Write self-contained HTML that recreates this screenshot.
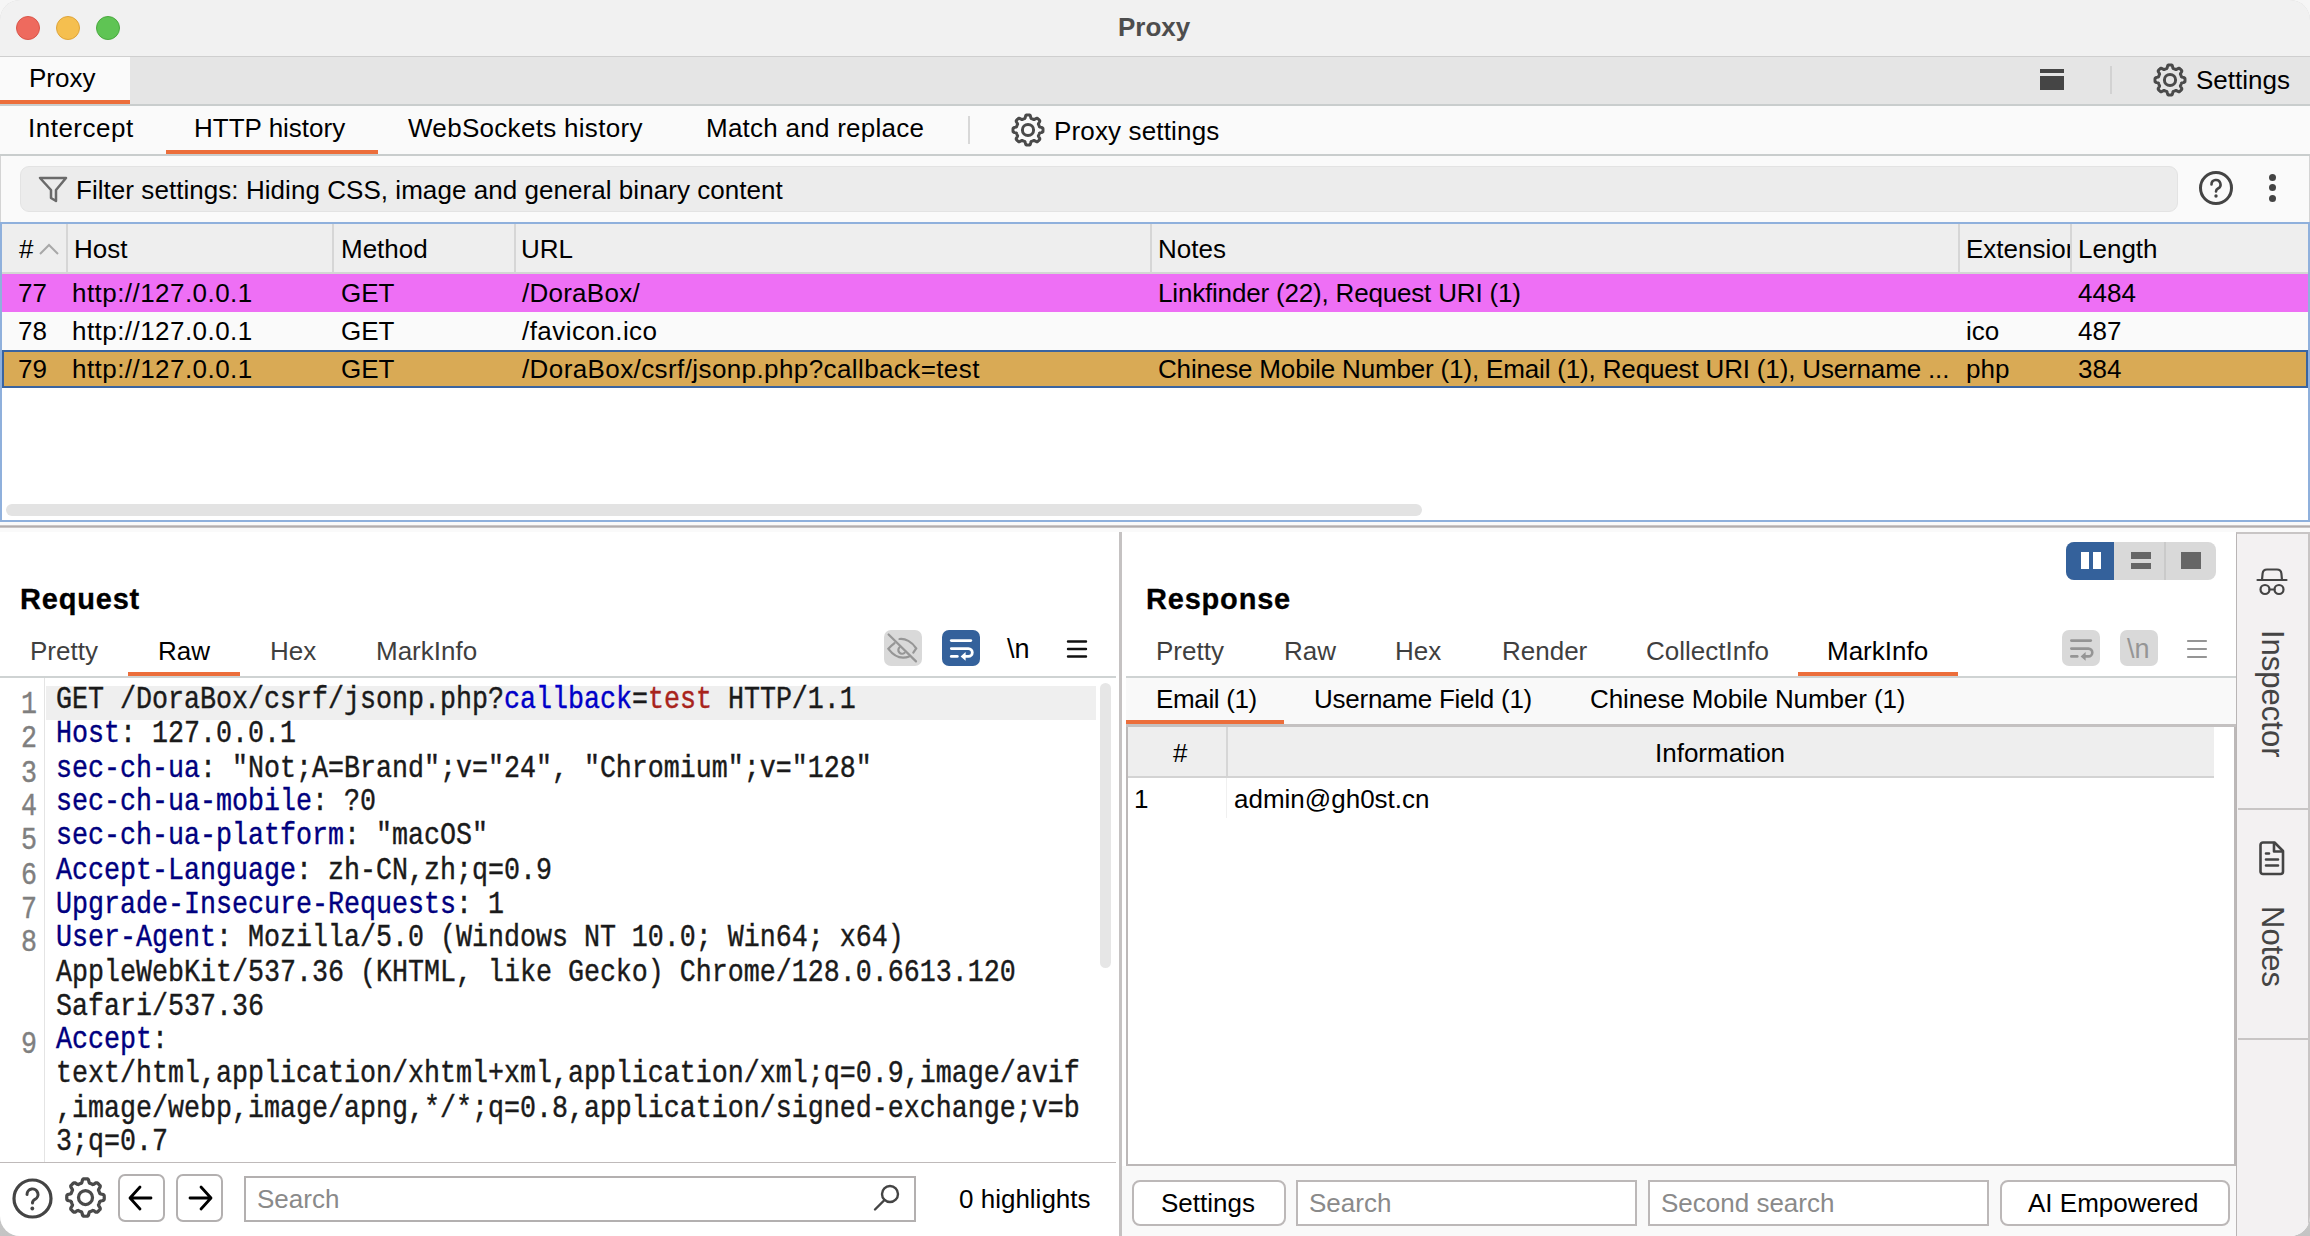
<!DOCTYPE html>
<html><head><meta charset="utf-8">
<style>
*{box-sizing:border-box;margin:0;padding:0}
html,body{width:2310px;height:1236px;overflow:hidden;background:linear-gradient(#f6f6f6,#f6f6f6 50%,#c4c4c4)}
body{font-family:"Liberation Sans",sans-serif;font-size:26px;color:#000;position:relative}
.a{position:absolute}
.t{position:absolute;white-space:nowrap;line-height:1}
.mono{font-family:"Liberation Mono",monospace;-webkit-text-stroke:0.35px currentColor}
.k{color:#00007f}
#win{position:absolute;left:0;top:0;width:2310px;height:1236px;background:#fafafa;border-radius:20px;overflow:hidden;box-shadow:inset 0 0 0 1px rgba(0,0,0,0.15)}
</style></head><body>
<div id="win">
<!-- title bar -->
<div class="a" style="left:0;top:0;width:2310px;height:57px;background:#f1f1f1;border-bottom:1px solid #cfcfcf"></div>
<div class="a" style="left:16px;top:16px;width:24px;height:24px;border-radius:50%;background:#ee6a5e;border:1px solid #d9564a"></div>
<div class="a" style="left:56px;top:16px;width:24px;height:24px;border-radius:50%;background:#f5bf4f;border:1px solid #dea43a"></div>
<div class="a" style="left:96px;top:16px;width:24px;height:24px;border-radius:50%;background:#5fc454;border:1px solid #4aa93f"></div>
<div class="t" style="left:1118px;top:14px;font-weight:bold;color:#4d4d4d;font-size:26px">Proxy</div>

<!-- row 1 tabs -->
<div class="a" style="left:0;top:57px;width:2310px;height:49px;background:#e5e5e5;border-bottom:2px solid #c9cdcd"></div>
<div class="a" style="left:0;top:57px;width:130px;height:47px;background:#fafafa"></div>
<div class="a" style="left:0;top:100px;width:130px;height:4px;background:#ec6e3b"></div>
<div class="t" style="left:29px;top:65px">Proxy</div>
<!-- window icon -->
<div class="a" style="left:2040px;top:69px;width:24px;height:4px;background:#454545"></div>
<div class="a" style="left:2040px;top:76px;width:24px;height:14px;background:#454545"></div>
<div class="a" style="left:2110px;top:66px;width:2px;height:28px;background:#d2d2d2"></div>
<svg class="a" style="left:2152px;top:62px" width="36" height="36" viewBox="0 0 36 36"><g fill="none" stroke="#4a4a4a" stroke-width="3"><path id="gearp" d="M18.00 3.00 L18.59 3.01 L19.18 3.05 L19.76 3.10 L20.28 3.63 L20.62 4.81 L20.88 5.99 L21.23 6.55 L21.68 6.68 L22.12 6.84 L22.55 7.01 L22.98 7.19 L23.40 7.40 L23.81 7.62 L24.45 7.47 L25.47 6.82 L26.55 6.23 L27.29 6.22 L27.74 6.59 L28.18 6.99 L28.61 7.39 L29.01 7.82 L29.41 8.26 L29.78 8.71 L29.77 9.45 L29.18 10.53 L28.53 11.55 L28.38 12.19 L28.60 12.60 L28.81 13.02 L28.99 13.45 L29.16 13.88 L29.32 14.32 L29.45 14.77 L30.01 15.12 L31.19 15.38 L32.37 15.72 L32.90 16.24 L32.95 16.82 L32.99 17.41 L33.00 18.00 L32.99 18.59 L32.95 19.18 L32.90 19.76 L32.37 20.28 L31.19 20.62 L30.01 20.88 L29.45 21.23 L29.32 21.68 L29.16 22.12 L28.99 22.55 L28.81 22.98 L28.60 23.40 L28.38 23.81 L28.53 24.45 L29.18 25.47 L29.77 26.55 L29.78 27.29 L29.41 27.74 L29.01 28.18 L28.61 28.61 L28.18 29.01 L27.74 29.41 L27.29 29.78 L26.55 29.77 L25.47 29.18 L24.45 28.53 L23.81 28.38 L23.40 28.60 L22.98 28.81 L22.55 28.99 L22.12 29.16 L21.68 29.32 L21.23 29.45 L20.88 30.01 L20.62 31.19 L20.28 32.37 L19.76 32.90 L19.18 32.95 L18.59 32.99 L18.00 33.00 L17.41 32.99 L16.82 32.95 L16.24 32.90 L15.72 32.37 L15.38 31.19 L15.12 30.01 L14.77 29.45 L14.32 29.32 L13.88 29.16 L13.45 28.99 L13.02 28.81 L12.60 28.60 L12.19 28.38 L11.55 28.53 L10.53 29.18 L9.45 29.77 L8.71 29.78 L8.26 29.41 L7.82 29.01 L7.39 28.61 L6.99 28.18 L6.59 27.74 L6.22 27.29 L6.23 26.55 L6.82 25.47 L7.47 24.45 L7.62 23.81 L7.40 23.40 L7.19 22.98 L7.01 22.55 L6.84 22.12 L6.68 21.68 L6.55 21.23 L5.99 20.88 L4.81 20.62 L3.63 20.28 L3.10 19.76 L3.05 19.18 L3.01 18.59 L3.00 18.00 L3.01 17.41 L3.05 16.82 L3.10 16.24 L3.63 15.72 L4.81 15.38 L5.99 15.12 L6.55 14.77 L6.68 14.32 L6.84 13.88 L7.01 13.45 L7.19 13.02 L7.40 12.60 L7.62 12.19 L7.47 11.55 L6.82 10.53 L6.23 9.45 L6.22 8.71 L6.59 8.26 L6.99 7.82 L7.39 7.39 L7.82 6.99 L8.26 6.59 L8.71 6.22 L9.45 6.23 L10.53 6.82 L11.55 7.47 L12.19 7.62 L12.60 7.40 L13.02 7.19 L13.45 7.01 L13.88 6.84 L14.32 6.68 L14.77 6.55 L15.12 5.99 L15.38 4.81 L15.72 3.63 L16.24 3.10 L16.82 3.05 L17.41 3.01Z" stroke-linejoin="round"/><circle cx="18" cy="18" r="5.6"/></g></svg>
<div class="t" style="left:2196px;top:67px">Settings</div>

<!-- row 2 tabs -->
<div class="a" style="left:0;top:106px;width:2310px;height:50px;background:#fafafa;border-bottom:2px solid #c9cdcd"></div>
<div class="t" style="left:28px;top:115px;letter-spacing:0.5px">Intercept</div>
<div class="t" style="left:194px;top:115px">HTTP history</div>
<div class="a" style="left:166px;top:150px;width:212px;height:4px;background:#ec6e3b"></div>
<div class="t" style="left:408px;top:115px;letter-spacing:0.3px">WebSockets history</div>
<div class="t" style="left:706px;top:115px;letter-spacing:0.25px">Match and replace</div>
<div class="a" style="left:968px;top:116px;width:2px;height:28px;background:#d8d8d8"></div>
<svg class="a" style="left:1010px;top:112px" width="36" height="36" viewBox="0 0 36 36"><g fill="none" stroke="#4a4a4a" stroke-width="3"><use href="#gearp"/><circle cx="18" cy="18" r="5.6"/></g></svg>
<div class="t" style="left:1054px;top:118px;letter-spacing:0.15px">Proxy settings</div>

<!-- filter bar -->
<div class="a" style="left:20px;top:166px;width:2158px;height:46px;background:#ececec;border:1px solid #e3e3e3;border-radius:9px"></div>
<svg class="a" style="left:38px;top:175px" width="30" height="30" viewBox="0 0 30 30"><path d="M2 3h26L18 15v11l-5-3V15z" fill="none" stroke="#6a6a6a" stroke-width="2.5" stroke-linejoin="round"/></svg>
<div class="t" style="left:76px;top:177px;letter-spacing:0.05px">Filter settings: Hiding CSS, image and general binary content</div>
<svg class="a" style="left:2198px;top:170px" width="36" height="36" viewBox="0 0 36 36"><circle cx="18" cy="18" r="15.5" fill="none" stroke="#444" stroke-width="3"/><path d="M13.5 14.5a4.5 4.5 0 1 1 6.5 4c-1.5.8-2 1.6-2 3" fill="none" stroke="#444" stroke-width="2.6" stroke-linecap="round"/><circle cx="18" cy="26" r="1.7" fill="#444"/></svg>
<div class="a" style="left:2269px;top:174px;width:7px;height:7px;border-radius:50%;background:#444"></div>
<div class="a" style="left:2269px;top:184px;width:7px;height:7px;border-radius:50%;background:#444"></div>
<div class="a" style="left:2269px;top:195px;width:7px;height:7px;border-radius:50%;background:#444"></div>

<!-- history table -->
<div class="a" style="left:0;top:222px;width:2310px;height:300px;background:#fff;border:2px solid #8fb0dc"></div>
<div class="a" style="left:2px;top:224px;width:2306px;height:50px;background:#eeeeee;border-bottom:2px solid #d3d6d4"></div>
<div class="a" style="left:66px;top:224px;width:2px;height:48px;background:#d6d6d6"></div>
<div class="a" style="left:332px;top:224px;width:2px;height:48px;background:#d6d6d6"></div>
<div class="a" style="left:514px;top:224px;width:2px;height:48px;background:#d6d6d6"></div>
<div class="a" style="left:1150px;top:224px;width:2px;height:48px;background:#d6d6d6"></div>
<div class="a" style="left:1958px;top:224px;width:2px;height:48px;background:#d6d6d6"></div>
<div class="a" style="left:2070px;top:224px;width:2px;height:48px;background:#d6d6d6"></div>
<div class="t" style="left:19px;top:236px">#</div>
<svg class="a" style="left:38px;top:242px" width="22" height="14" viewBox="0 0 22 14"><path d="M2 12L11 3l9 9" fill="none" stroke="#a8a8a8" stroke-width="2"/></svg>
<div class="t" style="left:74px;top:236px">Host</div>
<div class="t" style="left:341px;top:236px">Method</div>
<div class="t" style="left:521px;top:236px">URL</div>
<div class="t" style="left:1158px;top:236px">Notes</div>
<div class="a" style="left:1960px;top:224px;width:110px;height:48px;overflow:hidden"><div class="t" style="left:6px;top:12px">Extension</div></div>
<div class="t" style="left:2078px;top:236px">Length</div>

<!-- rows -->
<div class="a" style="left:2px;top:274px;width:2306px;height:38px;background:#ee6ff5"></div>
<div class="t" style="left:18px;top:280px">77</div>
<div class="t" style="left:72px;top:280px;letter-spacing:0.45px">http://127.0.0.1</div>
<div class="t" style="left:341px;top:280px">GET</div>
<div class="t" style="left:522px;top:280px;letter-spacing:0.25px">/DoraBox/</div>
<div class="t" style="left:1158px;top:280px;letter-spacing:-0.18px">Linkfinder (22), Request URI (1)</div>
<div class="t" style="left:2078px;top:280px">4484</div>

<div class="a" style="left:2px;top:312px;width:2306px;height:38px;background:#fafafa"></div>
<div class="t" style="left:18px;top:318px">78</div>
<div class="t" style="left:72px;top:318px;letter-spacing:0.45px">http://127.0.0.1</div>
<div class="t" style="left:341px;top:318px">GET</div>
<div class="t" style="left:522px;top:318px;letter-spacing:0.45px">/favicon.ico</div>
<div class="t" style="left:1966px;top:318px">ico</div>
<div class="t" style="left:2078px;top:318px">487</div>

<div class="a" style="left:2px;top:350px;width:2306px;height:38px;background:#d9aa55;border:2px solid #3a64a0"></div>
<div class="t" style="left:18px;top:356px">79</div>
<div class="t" style="left:72px;top:356px;letter-spacing:0.45px">http://127.0.0.1</div>
<div class="t" style="left:341px;top:356px">GET</div>
<div class="t" style="left:522px;top:356px;letter-spacing:0.4px">/DoraBox/csrf/jsonp.php?callback=test</div>
<div class="t" style="left:1158px;top:356px;letter-spacing:-0.16px">Chinese Mobile Number (1), Email (1), Request URI (1), Username ...</div>
<div class="t" style="left:1966px;top:356px">php</div>
<div class="t" style="left:2078px;top:356px">384</div>
<div class="a" style="left:6px;top:504px;width:1416px;height:12px;border-radius:6px;background:#e3e3e3"></div>

<!-- splitter -->
<div class="a" style="left:0;top:522px;width:2310px;height:10px;background:#fafafa"></div>
<div class="a" style="left:0;top:525px;width:2310px;height:3px;background:linear-gradient(#d6d2d2,#b3aeae 50%,#d6d2d2)"></div>

<!-- lower area -->
<div class="a" style="left:0;top:532px;width:2310px;height:704px;background:#fff"></div>
<!-- REQUEST PANEL -->
<div class="t" style="left:20px;top:585px;font-weight:bold;font-size:29px;letter-spacing:0.8px;-webkit-text-stroke:0.3px #000">Request</div>
<div class="t" style="left:30px;top:638px;color:#3f3f3f">Pretty</div>
<div class="t" style="left:158px;top:638px">Raw</div>
<div class="t" style="left:270px;top:638px;color:#3f3f3f">Hex</div>
<div class="t" style="left:376px;top:638px;color:#3f3f3f">MarkInfo</div>
<div class="a" style="left:128px;top:672px;width:112px;height:4px;background:#ec6e3b"></div>
<div class="a" style="left:0;top:676px;width:1116px;height:2px;background:#cfd3d3"></div>
<!-- eye button -->
<div class="a" style="left:884px;top:630px;width:38px;height:36px;border-radius:7px;background:#d9d9d9"></div>
<svg class="a" style="left:884px;top:630px" width="38" height="36" viewBox="0 0 38 36"><g fill="none" stroke="#969696" stroke-width="2.2" stroke-linecap="round"><path d="M4.6 4.5L32 31.4"/><path d="M15.5 9C21 8.3 28 11.5 32.2 18.4L29.3 22.6"/><path d="M10.5 13.2C8 15.2 6 17 4.4 18.8C9 24.8 14 27.6 19 27.6C21.5 27.6 23.5 27.1 25.2 26.4"/><path d="M15.6 17.2A3.7 3.7 0 0 0 20.6 22.8"/></g></svg>
<!-- wrap button -->
<div class="a" style="left:942px;top:630px;width:38px;height:36px;border-radius:7px;background:#34619b"></div>
<svg class="a" style="left:942px;top:630px" width="38" height="36" viewBox="0 0 38 36"><g fill="none" stroke="#fff" stroke-width="2.8" stroke-linecap="round"><path d="M9.3 10.6h19.5"/><path d="M9.3 18.6h17.1a3.9 3.9 0 0 1 0 7.8H23"/><path d="M9.3 26.4h6"/></g><path d="M18.6 26.4l5-4.3v8.6z" fill="#fff"/></svg>
<div class="t" style="left:1007px;top:636px;font-size:27px">\n</div>
<svg class="a" style="left:1066px;top:638px" width="22" height="22" viewBox="0 0 22 22"><g stroke="#111" stroke-width="2.4" stroke-linecap="round"><path d="M2 3.5h18M2 11h18M2 18.5h18"/></g></svg>

<!-- code editor -->
<div class="a" style="left:44px;top:678px;width:1px;height:484px;background:#e4e4e4"></div>
<div class="a" style="left:46px;top:686px;width:1050px;height:34px;background:#efefef"></div>
<div class="a" style="left:1100px;top:683px;width:11px;height:285px;border-radius:6px;background:#e6e6e6"></div>
<div id="code" class="a mono" style="left:56px;top:684px;font-size:26.67px;line-height:29.31px;color:#1a1a1a;white-space:pre;transform-origin:0 0;transform:scaleY(1.16)">GET /DoraBox/csrf/jsonp.php?<span style="color:#0000c8">callback</span>=<span style="color:#a8231b">test</span> HTTP/1.1
<span class="k">Host</span>: 127.0.0.1
<span class="k">sec-ch-ua</span>: "Not;A=Brand";v="24", "Chromium";v="128"
<span class="k">sec-ch-ua-mobile</span>: ?0
<span class="k">sec-ch-ua-platform</span>: "macOS"
<span class="k">Accept-Language</span>: zh-CN,zh;q=0.9
<span class="k">Upgrade-Insecure-Requests</span>: 1
<span class="k">User-Agent</span>: Mozilla/5.0 (Windows NT 10.0; Win64; x64)
AppleWebKit/537.36 (KHTML, like Gecko) Chrome/128.0.6613.120
Safari/537.36
<span class="k">Accept</span>:
text/html,application/xhtml+xml,application/xml;q=0.9,image/avif
,image/webp,image/apng,*/*;q=0.8,application/signed-exchange;v=b
3;q=0.7</div>
<div id="ln" class="a mono" style="left:-1px;top:689px;width:38px;text-align:right;font-size:26.67px;line-height:29.31px;color:#7f7f7f;white-space:pre;transform-origin:0 0;transform:scaleY(1.16)">1
2
3
4
5
6
7
8


9</div>
<div class="a" style="left:0;top:1162px;width:1116px;height:1px;background:#bfbaba"></div>
<!-- bottom toolbar request -->
<svg class="a" style="left:12px;top:1178px" width="41" height="41" viewBox="0 0 41 41"><circle cx="20.5" cy="20.5" r="18.5" fill="none" stroke="#444" stroke-width="3.2"/><path d="M15 16.5a5.5 5.5 0 1 1 8 4.8c-1.8 1-2.5 1.8-2.5 3.6" fill="none" stroke="#444" stroke-width="3" stroke-linecap="round"/><circle cx="20.3" cy="30.5" r="1.9" fill="#444"/></svg>
<svg class="a" style="left:63px;top:1175px" width="45" height="45" viewBox="0 0 36 36"><g fill="none" stroke="#4a4a4a" stroke-width="2.6"><use href="#gearp"/><circle cx="18" cy="18" r="5.6"/></g></svg>
<div class="a" style="left:118px;top:1174px;width:47px;height:48px;border:2px solid #b3b0b0;border-radius:7px"></div>
<svg class="a" style="left:118px;top:1174px" width="47" height="48" viewBox="0 0 47 48"><g fill="none" stroke="#000" stroke-width="2.8" stroke-linecap="round" stroke-linejoin="round"><path d="M13 24h20M22 13L12 24l10 11"/></g></svg>
<div class="a" style="left:176px;top:1174px;width:47px;height:48px;border:2px solid #b3b0b0;border-radius:7px"></div>
<svg class="a" style="left:176px;top:1174px" width="47" height="48" viewBox="0 0 47 48"><g fill="none" stroke="#000" stroke-width="2.8" stroke-linecap="round" stroke-linejoin="round"><path d="M14 24h20M25 13l10 11-10 11"/></g></svg>
<div class="a" style="left:244px;top:1176px;width:672px;height:46px;border:2px solid #b3b0b0;background:#fff"></div>
<div class="t" style="left:257px;top:1186px;color:#8a8a8a">Search</div>
<svg class="a" style="left:872px;top:1183px" width="30" height="30" viewBox="0 0 30 30"><g fill="none" stroke="#444" stroke-width="2.4" stroke-linecap="round"><circle cx="18" cy="11" r="8"/><path d="M12.5 17L3 26.5"/></g></svg>
<div class="t" style="left:959px;top:1186px">0 highlights</div>

<!-- divider -->
<div class="a" style="left:1119px;top:532px;width:3px;height:704px;background:#c5c2c2"></div>

<!-- RESPONSE PANEL -->
<div class="t" style="left:1146px;top:585px;font-weight:bold;font-size:29px;letter-spacing:0.8px;-webkit-text-stroke:0.3px #000">Response</div>
<!-- layout switcher -->
<div class="a" style="left:2066px;top:542px;width:150px;height:38px;border-radius:8px;background:#d9d9d9;overflow:hidden"><div class="a" style="left:0;top:0;width:48px;height:38px;background:#34619b"></div><div class="a" style="left:98px;top:0;width:2px;height:38px;background:#cacaca"></div></div>
<div class="a" style="left:2081px;top:552px;width:8px;height:17px;background:#fff"></div>
<div class="a" style="left:2093px;top:552px;width:8px;height:17px;background:#fff"></div>
<div class="a" style="left:2131px;top:552px;width:20px;height:7px;background:#666"></div>
<div class="a" style="left:2131px;top:563px;width:20px;height:6px;background:#666"></div>
<div class="a" style="left:2181px;top:552px;width:20px;height:17px;background:#666"></div>

<div class="t" style="left:1156px;top:638px;color:#3f3f3f">Pretty</div>
<div class="t" style="left:1284px;top:638px;color:#3f3f3f">Raw</div>
<div class="t" style="left:1395px;top:638px;color:#3f3f3f">Hex</div>
<div class="t" style="left:1502px;top:638px;color:#3f3f3f">Render</div>
<div class="t" style="left:1646px;top:638px;color:#3f3f3f">CollectInfo</div>
<div class="t" style="left:1827px;top:638px">MarkInfo</div>
<div class="a" style="left:1798px;top:672px;width:160px;height:4px;background:#ec6e3b"></div>
<!-- resp toolbar buttons -->
<div class="a" style="left:2062px;top:630px;width:38px;height:36px;border-radius:7px;background:#d9d9d9"></div>
<svg class="a" style="left:2062px;top:630px" width="38" height="36" viewBox="0 0 38 36"><g fill="none" stroke="#959595" stroke-width="2.6" stroke-linecap="round"><path d="M9.3 10.6h19.5"/><path d="M9.3 18.6h17.1a3.9 3.9 0 0 1 0 7.8H23"/><path d="M9.3 26.4h6"/></g><path d="M18.6 26.4l5-4.3v8.6z" fill="#959595"/></svg>
<div class="a" style="left:2120px;top:630px;width:38px;height:36px;border-radius:7px;background:#d9d9d9"></div>
<div class="t" style="left:2127px;top:636px;font-size:27px;color:#959595">\n</div>
<svg class="a" style="left:2186px;top:638px" width="22" height="22" viewBox="0 0 22 22"><g stroke="#959595" stroke-width="2.2" stroke-linecap="round"><path d="M2 3h18M2 11h18M2 19h18"/></g></svg>
<div class="a" style="left:1126px;top:676px;width:1110px;height:2px;background:#cfd3d3"></div>
<!-- subtabs -->
<div class="a" style="left:1126px;top:678px;width:1110px;height:47px;background:#f9f9f9"></div>
<div class="t" style="left:1156px;top:686px;letter-spacing:-0.35px">Email (1)</div>
<div class="t" style="left:1314px;top:686px;letter-spacing:-0.25px">Username Field (1)</div>
<div class="t" style="left:1590px;top:686px;letter-spacing:-0.1px">Chinese Mobile Number (1)</div>
<div class="a" style="left:1126px;top:720px;width:158px;height:4px;background:#ec6e3b"></div>
<div class="a" style="left:1126px;top:724px;width:1110px;height:3px;background:#c4c1c1"></div>
<!-- resp table -->
<div class="a" style="left:1126px;top:727px;width:1110px;height:439px;border:2px solid #bcb8b8;border-top:0;background:#fff"></div>
<div class="a" style="left:1128px;top:727px;width:1086px;height:51px;background:#eeeeee;border-bottom:2px solid #d3d3d3"></div>
<div class="a" style="left:1226px;top:727px;width:2px;height:49px;background:#d6d6d6"></div>
<div class="a" style="left:1226px;top:778px;width:1px;height:40px;background:#f0f0f0"></div>
<div class="t" style="left:1173px;top:740px">#</div>
<div class="t" style="left:1655px;top:740px">Information</div>
<div class="t" style="left:1134px;top:786px">1</div>
<div class="t" style="left:1234px;top:786px">admin@gh0st.cn</div>
<!-- resp bottom bar -->
<div class="a" style="left:1122px;top:1166px;width:1114px;height:70px;background:#f9f9f9"></div>
<div class="a" style="left:1132px;top:1180px;width:154px;height:46px;border:2px solid #bcb8b8;border-radius:8px;background:#fff"></div>
<div class="t" style="left:1161px;top:1190px">Settings</div>
<div class="a" style="left:1296px;top:1180px;width:341px;height:46px;border:2px solid #bcb8b8;background:#fff"></div>
<div class="t" style="left:1309px;top:1190px;color:#8a8a8a">Search</div>
<div class="a" style="left:1648px;top:1180px;width:341px;height:46px;border:2px solid #bcb8b8;background:#fff"></div>
<div class="t" style="left:1661px;top:1190px;color:#8a8a8a">Second search</div>
<div class="a" style="left:2000px;top:1180px;width:230px;height:46px;border:2px solid #bcb8b8;border-radius:8px;background:#fff"></div>
<div class="t" style="left:2028px;top:1190px">AI Empowered</div>

<!-- sidebar -->
<div class="a" style="left:2236px;top:532px;width:74px;height:704px;background:#f3f1f2;border-left:1px solid #b9b5b5;border-top:2px solid #c8c5c5;border-right:2px solid #c8c5c5"></div>
<div class="a" style="left:2238px;top:808px;width:70px;height:2px;background:#c8c5c5"></div>
<div class="a" style="left:2238px;top:1038px;width:70px;height:2px;background:#c8c5c5"></div>
<svg class="a" style="left:2254px;top:566px" width="36" height="32" viewBox="0 0 36 32"><g fill="none" stroke="#444" stroke-width="2.2" stroke-linecap="round"><path d="M3.5 14h29"/><path d="M8 14L8.6 7.5Q9 3.5 13 3.5H23Q27 3.5 27.4 7.5L28 14"/><circle cx="11" cy="23.5" r="4.5"/><circle cx="25" cy="23.5" r="4.5"/><path d="M15.5 23.5h5"/></g></svg>
<div class="t" style="left:2288px;top:630px;transform-origin:0 0;transform:rotate(90deg);color:#444;font-size:31px">Inspector</div>
<svg class="a" style="left:2256px;top:838px" width="32" height="40" viewBox="0 0 32 40"><g fill="none" stroke="#444" stroke-width="2.6" stroke-linejoin="round" stroke-linecap="round"><path d="M7 4.5h11.5l8.5 8.5v20.5a2.5 2.5 0 0 1-2.5 2.5H7a2.5 2.5 0 0 1-2.5-2.5V7A2.5 2.5 0 0 1 7 4.5z"/><path d="M18 5v8.5h8.5"/><path d="M10 15.5h3M10 21.5h12M10 27.5h12"/></g></svg>
<div class="t" style="left:2288px;top:906px;transform-origin:0 0;transform:rotate(90deg);color:#444;font-size:31px">Notes</div>

</div>
</body></html>
